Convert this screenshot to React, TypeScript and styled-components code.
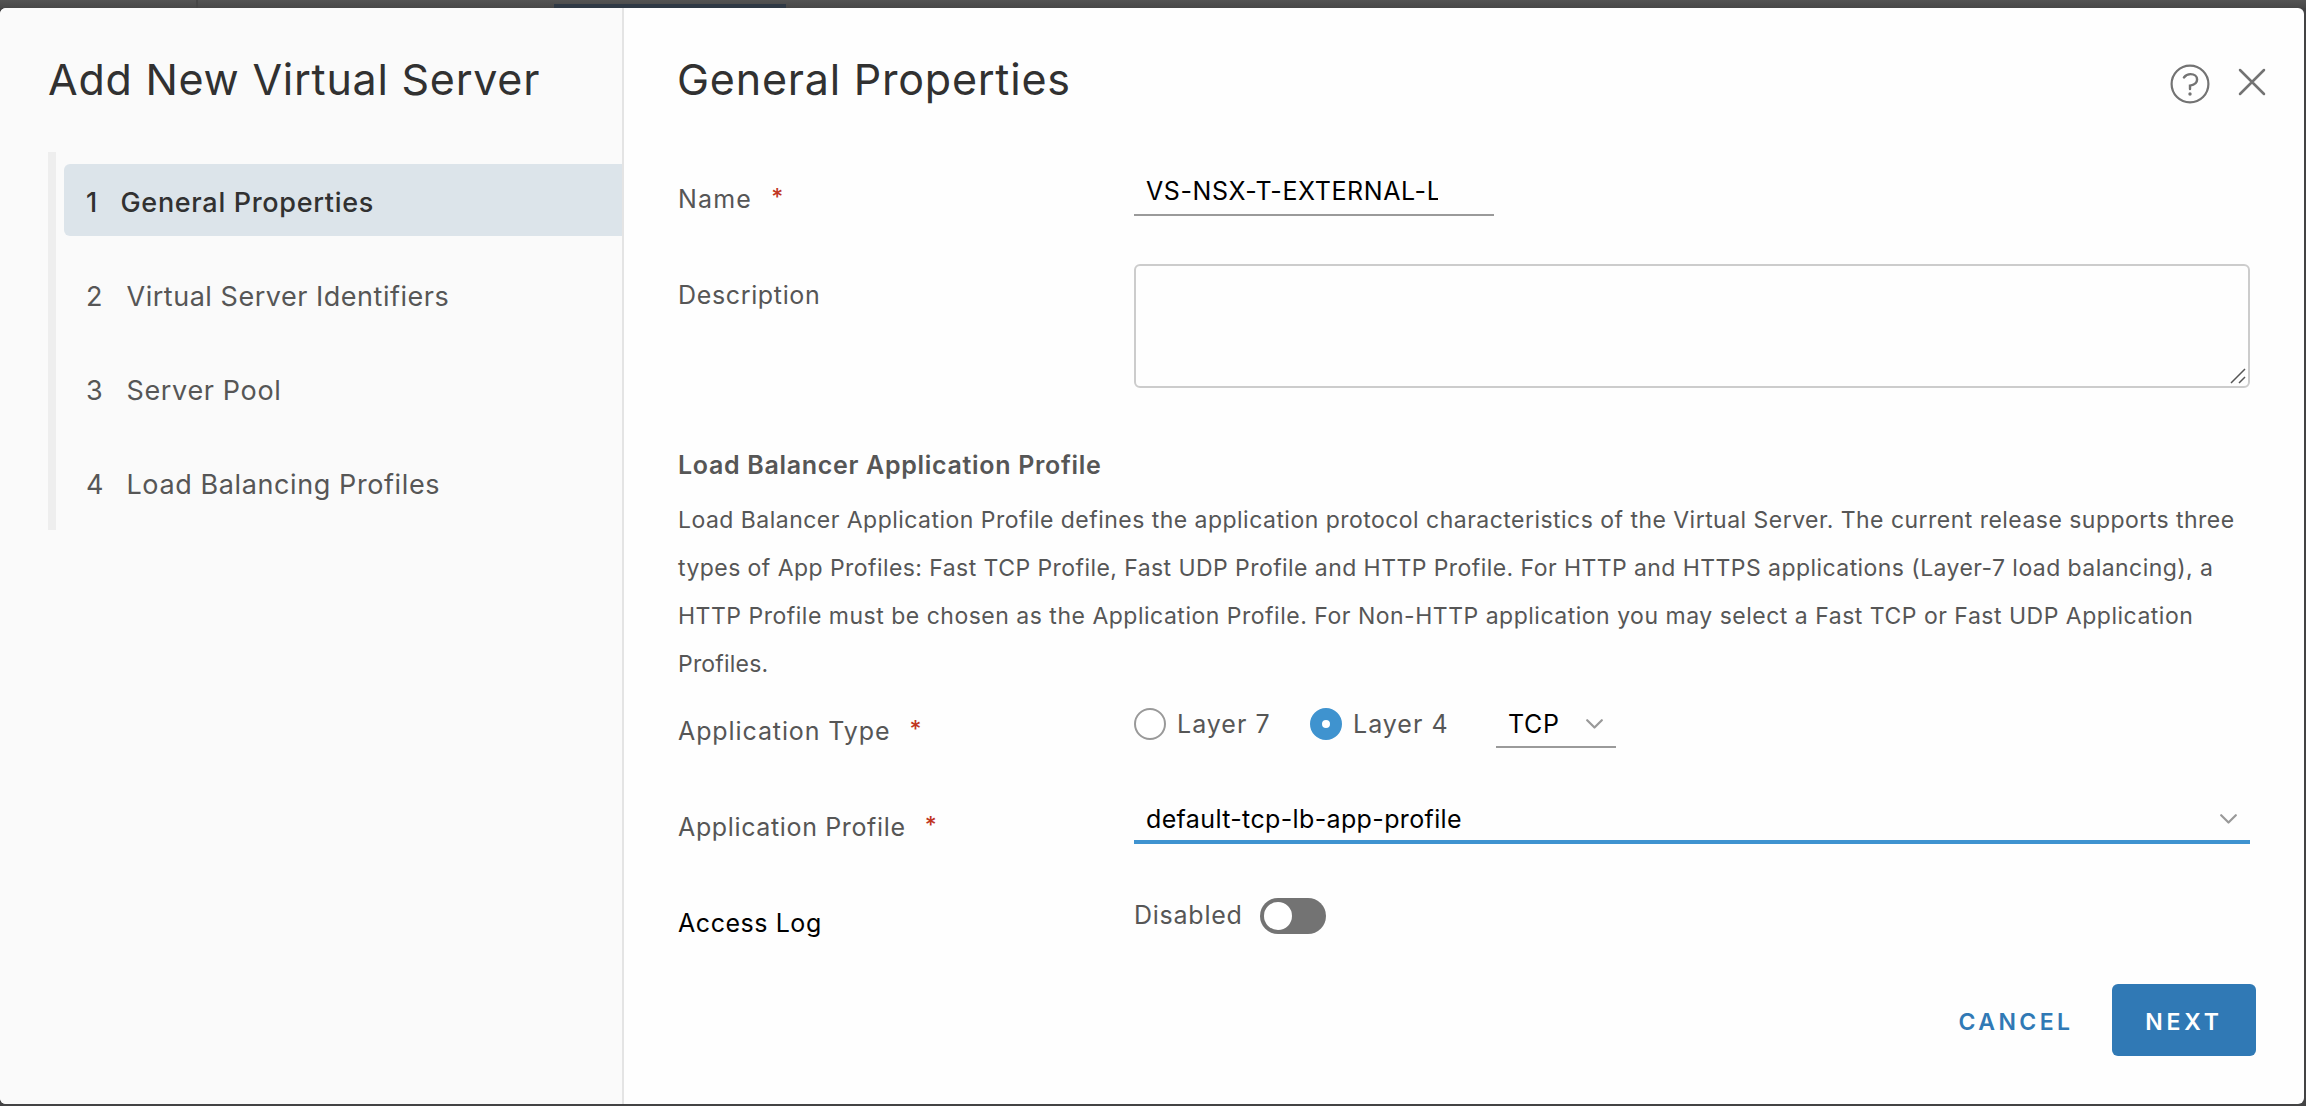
import React from "react";
import styled, { createGlobalStyle } from "styled-components";

const GlobalStyle = createGlobalStyle`
  *, *::before, *::after { box-sizing: border-box; }
  body {
    margin: 0;
    font-family: Inter, "Noto Sans", sans-serif;
    font-weight: 400;
    color: #565656;
    background: #434344;
    overflow: hidden;
  }
  button, input, textarea { font-family: inherit; }
`;

const Page = styled.div`
  display: flex;
  flex-direction: column;
  width: 2306px;
  height: 1106px;
  background: #434344;
`;

const Backdrop = styled.div`
  flex: none;
  display: flex;
  align-items: flex-end;
  height: 8px;
  background: linear-gradient(#535353, #474747);
`;

const BackdropNav = styled.div`
  width: 198px;
  height: 8px;
  border-right: 2px solid #454545;
`;

const BackdropTab = styled.div`
  width: 232px;
  height: 4px;
  margin-left: 356px;
  background: #2f3945;
`;

const Dialog = styled.div`
  flex: none;
  display: flex;
  width: 2304px;
  height: 1096px;
  border-radius: 6px;
  overflow: hidden;
  background: #fefefe;
`;

const Sidebar = styled.aside`
  flex: none;
  width: 624px;
  padding: 43px 0 0 48px;
  border-right: 2px solid #e4e4e4;
  background: #fafafa;
`;

const Title = styled.h1<{ $spacing: number }>`
  margin: 0;
  font-size: 43px;
  line-height: 56px;
  font-weight: 380;
  letter-spacing: ${(p) => p.$spacing}px;
  color: #313131;
  white-space: nowrap;
`;

const Steps = styled.nav`
  display: flex;
  flex-direction: column;
  gap: 22px;
  margin-top: 45px;
  padding: 12px 0 12px 8px;
  border-left: 8px solid #eeeeee;
`;

const Step = styled.button<{ $active?: boolean; $spacing: number }>`
  display: flex;
  align-items: center;
  height: 72px;
  padding: 4px 0 0 22px;
  border: 0;
  border-radius: 6px 0 0 6px;
  background: ${(p) => (p.$active ? "#dce4ea" : "transparent")};
  color: ${(p) => (p.$active ? "#313131" : "#565656")};
  font-size: 27px;
  font-weight: ${(p) => (p.$active ? 500 : 400)};
  letter-spacing: ${(p) => p.$spacing}px;
  text-align: left;
  white-space: nowrap;
`;

const StepNumber = styled.span<{ $active?: boolean }>`
  width: ${(p) => (p.$active ? 34.5 : 40.5)}px;
  letter-spacing: 0;
`;

const Main = styled.main`
  flex: 1;
  display: flex;
  flex-direction: column;
`;

const Header = styled.header`
  display: flex;
  justify-content: space-between;
  height: 160px;
  padding: 43px 37px 0 53px;
`;

const HeaderActions = styled.div`
  display: flex;
  align-items: flex-start;
  gap: 27px;
  padding-top: 13px;
`;

const IconButton = styled.button`
  display: block;
  padding: 0;
  border: 0;
  background: none;
  color: #737373;
  svg { display: block; }
`;

const Form = styled.form`
  display: flex;
  flex-direction: column;
  width: 1626px;
  padding-left: 54px;
`;

const Field = styled.div<{ $height: number }>`
  display: grid;
  grid-template-columns: 456px 1116px;
  align-items: start;
  height: ${(p) => p.$height}px;
`;

const Label = styled.label<{ $spacing: number; $dark?: boolean }>`
  display: flex;
  padding-top: 15px;
  font-size: 25px;
  line-height: 32px;
  letter-spacing: ${(p) => p.$spacing}px;
  color: ${(p) => (p.$dark ? "#000" : "#565656")};
  white-space: nowrap;
`;

const Required = styled.span`
  margin-left: 19px;
  font-size: 23px;
  font-weight: 500;
  line-height: 28px;
  letter-spacing: 0;
  color: #c0351f;
`;

const NameInput = styled.input`
  width: 360px;
  height: 48px;
  padding: 0 56px 0 12px;
  border: 0;
  border-bottom: 2px solid #9a9a9a;
  outline: 0;
  background: none;
  color: #000;
  font-size: 25px;
  letter-spacing: 0.6px;
`;

const DescriptionBox = styled.div`
  display: flex;
  align-items: flex-end;
  justify-content: flex-end;
  height: 124px;
  padding: 0 2px 2px 0;
  border: 2px solid #cccccc;
  border-radius: 6px;
`;

const SectionTitle = styled.h2`
  margin: 61px 0 0;
  font-size: 25px;
  font-weight: 600;
  line-height: 32px;
  letter-spacing: 0.69px;
`;

const Paragraph = styled.p`
  margin: 15px 0 12px;
  font-size: 23px;
  line-height: 48px;
  white-space: nowrap;
`;

const TextLine = styled.span<{ $spacing: number }>`
  display: block;
  letter-spacing: ${(p) => p.$spacing}px;
`;

const Controls = styled.div<{ $height: number }>`
  display: flex;
  align-items: center;
  height: ${(p) => p.$height}px;
`;

const Radio = styled.label<{ $spacing: number; $width: number }>`
  display: flex;
  align-items: center;
  gap: 11px;
  width: ${(p) => p.$width}px;
  font-size: 25px;
  line-height: 32px;
  letter-spacing: ${(p) => p.$spacing}px;
  white-space: nowrap;
`;

const RadioMark = styled.span<{ $checked?: boolean }>`
  flex: none;
  width: 32px;
  height: 32px;
  border: ${(p) => (p.$checked ? "12px solid #3f93cf" : "2px solid #999999")};
  border-radius: 50%;
  background: #fff;
`;

const Select = styled.div<{ $width: number; $focused?: boolean; $spacing: number }>`
  display: flex;
  align-items: center;
  justify-content: space-between;
  width: ${(p) => p.$width}px;
  height: 48px;
  padding: 1px 13px 0 12px;
  border-bottom: ${(p) => (p.$focused ? "4px solid #3f93d0" : "2px solid #9a9a9a")};
  font-size: 25px;
  letter-spacing: ${(p) => p.$spacing}px;
  color: #000;
  svg { display: block; }
`;

const ToggleText = styled.span`
  width: 126px;
  font-size: 25px;
  line-height: 32px;
  letter-spacing: 0.75px;
`;

const Toggle = styled.span`
  display: flex;
  align-items: center;
  width: 66px;
  height: 36px;
  margin-top: 2px;
  padding: 4px;
  border-radius: 18px;
  background: #737373;
`;

const Knob = styled.span`
  width: 28px;
  height: 28px;
  border-radius: 50%;
  background: #fff;
`;

const Footer = styled.footer`
  display: flex;
  justify-content: flex-end;
  gap: 16px;
  padding-right: 48px;
`;

const Button = styled.button<{ $primary?: boolean; $width: number; $spacing: number }>`
  width: ${(p) => p.$width}px;
  height: 72px;
  padding: 4px 0 0;
  border: 0;
  border-radius: 6px;
  background: ${(p) => (p.$primary ? "#3079b5" : "transparent")};
  color: ${(p) => (p.$primary ? "#fff" : "#3079b5")};
  font-size: 23px;
  font-weight: 600;
  letter-spacing: ${(p) => p.$spacing}px;
`;

const HelpIcon = () => (
  <svg width="40" height="40" viewBox="0 0 40 40" fill="none" stroke="currentColor" strokeWidth="2.2">
    <circle cx="20" cy="20" r="18.4" />
    <path d="M13.9 13.4C15.6 11.2 17.8 10.1 20.5 10.1c4 0 6.6 2.1 6.6 5.4 0 3.6-2.9 5.4-7.1 6.1V25" strokeWidth="2.4" strokeLinecap="round" />
    <circle cx="20" cy="30" r="1.7" fill="currentColor" stroke="none" />
  </svg>
);

const CloseIcon = () => (
  <svg width="30" height="40" viewBox="0 0 30 40" fill="none" stroke="currentColor" strokeWidth="2.5" strokeLinecap="round">
    <path d="M3 6L27 30M27 6L3 30" />
  </svg>
);

const Chevron = () => (
  <svg width="17" height="10" viewBox="0 0 17 10" fill="none" stroke="#999" strokeWidth="2.2" strokeLinecap="round" strokeLinejoin="round">
    <path d="M1.2 1.2L8.5 8.5L15.8 1.2" />
  </svg>
);

const ResizeHandle = () => (
  <svg width="16" height="16" viewBox="0 0 16 16" fill="none" stroke="#555" strokeWidth="1.5">
    <path d="M1 15L15 1M9 15L15 9" />
  </svg>
);

const steps = [
  { label: "General Properties", spacing: 0.68 },
  { label: "Virtual Server Identifiers", spacing: 0.523 },
  { label: "Server Pool", spacing: 0.65 },
  { label: "Load Balancing Profiles", spacing: 0.6 },
];

const description = [
  {
    text: "Load Balancer Application Profile defines the application protocol characteristics of the Virtual Server. The current release supports three",
    spacing: 0.468,
  },
  {
    text: "types of App Profiles: Fast TCP Profile, Fast UDP Profile and HTTP Profile. For HTTP and HTTPS applications (Layer-7 load balancing), a",
    spacing: 0.434,
  },
  {
    text: "HTTP Profile must be chosen as the Application Profile. For Non-HTTP application you may select a Fast TCP or Fast UDP Application",
    spacing: 0.504,
  },
  { text: "Profiles.", spacing: 0.2 },
];

export default function App() {
  return (
    <>
      <GlobalStyle />
      <Page>
        <Backdrop>
          <BackdropNav />
          <BackdropTab />
        </Backdrop>
        <Dialog>
          <Sidebar>
            <Title $spacing={0.75}>Add New Virtual Server</Title>
            <Steps>
              {steps.map((step, i) => (
                <Step key={step.label} $active={i === 0} $spacing={step.spacing}>
                  <StepNumber $active={i === 0}>{i + 1}</StepNumber>
                  {step.label}
                </Step>
              ))}
            </Steps>
          </Sidebar>
          <Main>
            <Header>
              <Title $spacing={0.78}>General Properties</Title>
              <HeaderActions>
                <IconButton aria-label="Help">
                  <HelpIcon />
                </IconButton>
                <IconButton aria-label="Close">
                  <CloseIcon />
                </IconButton>
              </HeaderActions>
            </Header>
            <Form>
              <Field $height={96}>
                <Label $spacing={1.2}>
                  Name<Required>*</Required>
                </Label>
                <NameInput defaultValue="VS-NSX-T-EXTERNAL-LB" />
              </Field>
              <Field $height={124}>
                <Label $spacing={0.65}>Description</Label>
                <DescriptionBox>
                  <ResizeHandle />
                </DescriptionBox>
              </Field>
              <SectionTitle>Load Balancer Application Profile</SectionTitle>
              <Paragraph>
                {description.map((line) => (
                  <TextLine key={line.text} $spacing={line.spacing}>
                    {line.text}
                  </TextLine>
                ))}
              </Paragraph>
              <Field $height={96}>
                <Label $spacing={0.9}>
                  Application Type<Required>*</Required>
                </Label>
                <Controls $height={48}>
                  <Radio $spacing={1} $width={176}>
                    <RadioMark />
                    Layer 7
                  </Radio>
                  <Radio $spacing={1} $width={186}>
                    <RadioMark $checked />
                    Layer 4
                  </Radio>
                  <Select $width={120} $spacing={0.67}>
                    TCP
                    <Chevron />
                  </Select>
                </Controls>
              </Field>
              <Field $height={96}>
                <Label $spacing={0.64}>
                  Application Profile<Required>*</Required>
                </Label>
                <Select $width={1116} $focused $spacing={0.365}>
                  default-tcp-lb-app-profile
                  <Chevron />
                </Select>
              </Field>
              <Field $height={92}>
                <Label $spacing={0.55} $dark>
                  Access Log
                </Label>
                <Controls $height={46}>
                  <ToggleText>Disabled</ToggleText>
                  <Toggle>
                    <Knob />
                  </Toggle>
                </Controls>
              </Field>
            </Form>
            <Footer>
              <Button $width={160} $spacing={3.4}>
                CANCEL
              </Button>
              <Button $width={144} $spacing={3.8} $primary>
                NEXT
              </Button>
            </Footer>
          </Main>
        </Dialog>
      </Page>
    </>
  );
}
